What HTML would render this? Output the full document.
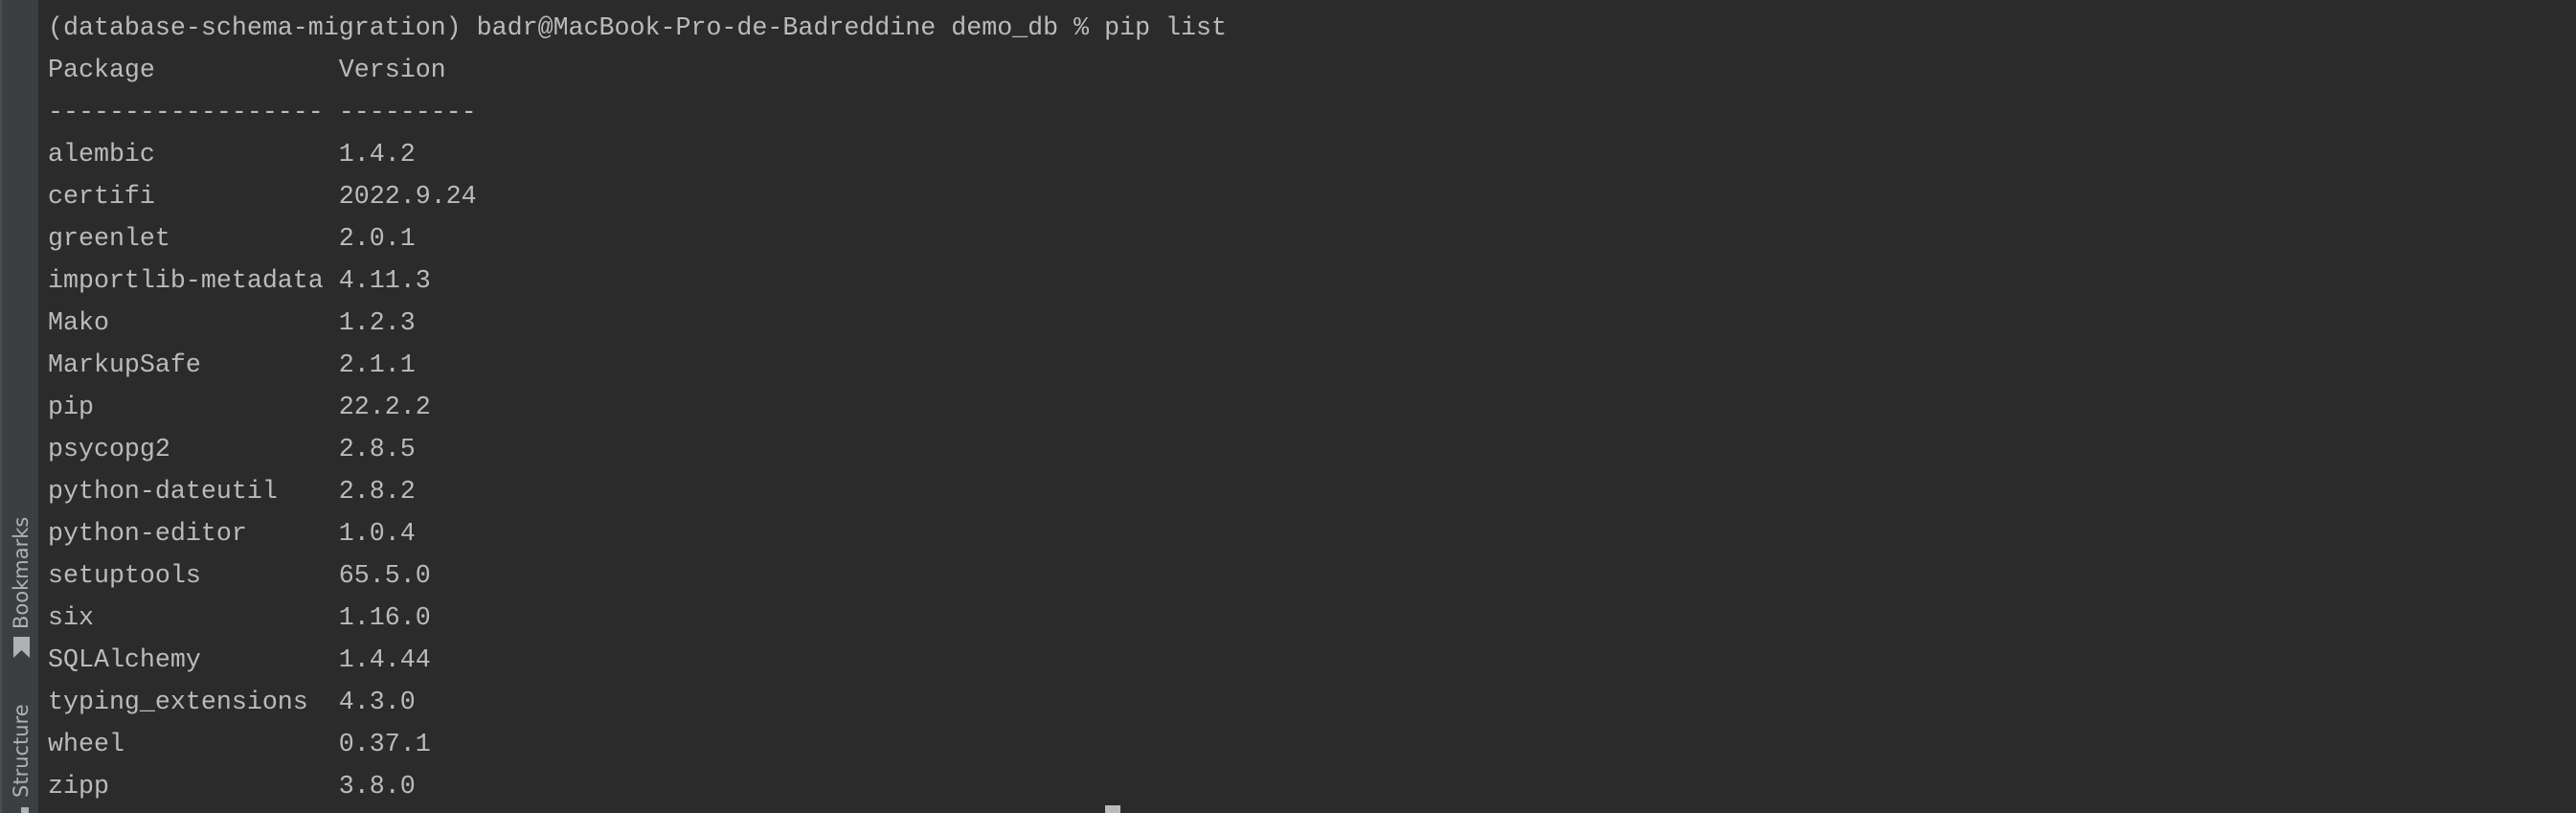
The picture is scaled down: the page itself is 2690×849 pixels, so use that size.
<!DOCTYPE html>
<html><head><style>
html,body{margin:0;padding:0;width:2690px;height:849px;overflow:hidden;background:#2b2b2b;}
#side{position:absolute;left:0;top:0;width:40px;height:849px;background:#3c3f41;border-left:2px solid #4b4e51;box-sizing:border-box;}
.vt{position:absolute;font-family:"DejaVu Sans",sans-serif;font-size:21px;color:#afb1b3;transform:rotate(-90deg);transform-origin:left top;white-space:nowrap;}
#term{position:absolute;left:50px;top:8px;font-family:"Liberation Mono",monospace;font-size:26.65px;line-height:44px;color:#bbbbbb;white-space:pre;margin:0;}
</style></head><body>
<div id="side">
<div class="vt" style="left:8px;top:657px;">Bookmarks</div>
<svg style="position:absolute;left:11px;top:664px" width="19" height="24" viewBox="0 0 19 24"><path d="M1 1H18V23L9.5 15L1 23Z" fill="#afb1b3"/></svg>
<div class="vt" style="left:8px;top:833px;">Structure</div>
<div style="position:absolute;left:20px;top:843px;width:8px;height:6px;background:#afb1b3"></div>
</div>
<pre id="term">(database-schema-migration) badr@MacBook-Pro-de-Badreddine demo_db % pip list
Package            Version
------------------ ---------
alembic            1.4.2
certifi            2022.9.24
greenlet           2.0.1
importlib-metadata 4.11.3
Mako               1.2.3
MarkupSafe         2.1.1
pip                22.2.2
psycopg2           2.8.5
python-dateutil    2.8.2
python-editor      1.0.4
setuptools         65.5.0
six                1.16.0
SQLAlchemy         1.4.44
typing_extensions  4.3.0
wheel              0.37.1
zipp               3.8.0</pre>
<div style="position:absolute;left:1154px;top:841px;width:16px;height:8px;background:#bbbbbb"></div>
</body></html>
